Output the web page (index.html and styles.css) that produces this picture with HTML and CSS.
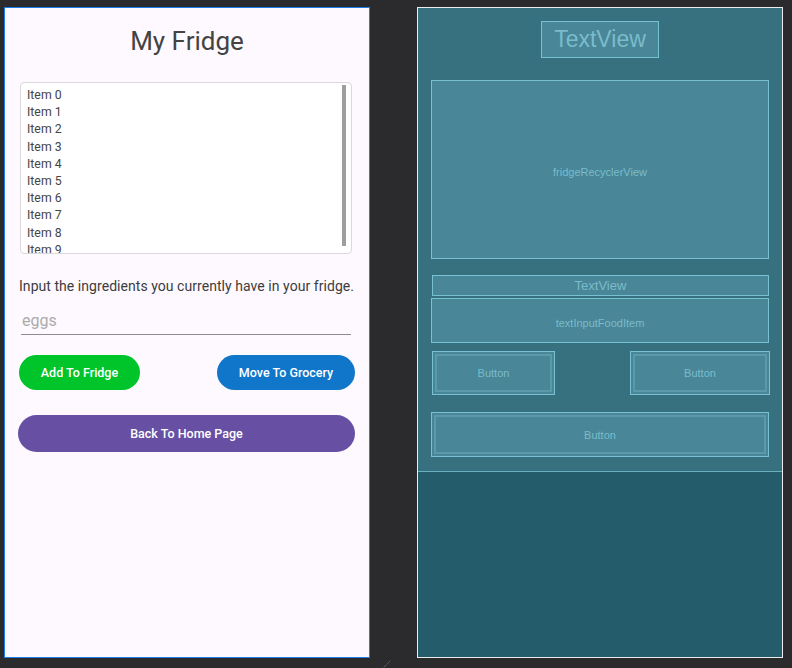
FILE: index.html
```html
<!DOCTYPE html>
<html lang="en">
<head>
<meta charset="utf-8">
<title>My Fridge</title>
<link rel="stylesheet" href="styles.css">
</head>
<body>
<div class="screen">
  <div class="phone">
    <h1 class="title">My Fridge</h1>
    <div class="list">
      <div class="item">Item 0</div>
      <div class="item">Item 1</div>
      <div class="item">Item 2</div>
      <div class="item">Item 3</div>
      <div class="item">Item 4</div>
      <div class="item">Item 5</div>
      <div class="item">Item 6</div>
      <div class="item">Item 7</div>
      <div class="item">Item 8</div>
      <div class="item">Item 9</div>
      <div class="scrollbar"></div>
    </div>
    <p class="prompt">Input the ingredients you currently have in your fridge.</p>
    <div class="input"><span class="hint">eggs</span></div>
    <div class="btn-row">
      <button class="btn btn-green btn-add">Add To Fridge</button>
      <button class="btn btn-blue btn-move">Move To Grocery</button>
    </div>
    <button class="btn btn-purple btn-wide">Back To Home Page</button>
  </div>

  <div class="blueprint">
    <div class="bp-top">
      <div class="bp-box bp-title">TextView</div>
      <div class="bp-box bp-recycler">fridgeRecyclerView</div>
      <div class="bp-box bp-text">TextView</div>
      <div class="bp-box bp-input">textInputFoodItem</div>
      <div class="bp-row">
        <div class="bp-btn bp-btn-1"><span class="bp-btn-inner">Button</span></div>
        <div class="bp-btn bp-btn-2"><span class="bp-btn-inner">Button</span></div>
      </div>
      <div class="bp-btn bp-btn-wide"><span class="bp-btn-inner">Button</span></div>
    </div>
    <div class="bp-bottom"></div>
  </div>

  <svg class="grip" width="9" height="9" viewBox="0 0 9 9">
    <line x1="0.5" y1="8.5" x2="8.5" y2="0.5" stroke="#7a7a7a" stroke-width="1" stroke-dasharray="1 1"/>
  </svg>
</div>
</body>
</html>
```

FILE: styles.css
```css
* {
  box-sizing: border-box;
}

html, body {
  margin: 0;
  padding: 0;
  background: #2b2b2d;
}

.screen {
  position: relative;
  width: 792px;
  height: 668px;
  display: flex;
  align-items: flex-start;
  gap: 47px;
  padding: 7px 0 0 4px;
  font-family: Roboto, "Noto Sans", sans-serif;
}

/* ---------- phone preview ---------- */
.phone {
  width: 366px;
  height: 651px;
  background: #fef9fe;
  border: 1px solid #1c7fe6;
  display: flex;
  flex-direction: column;
  align-items: flex-start;
}

.title {
  align-self: stretch;
  margin: 18px 0 0;
  height: 30px;
  line-height: 30px;
  font-size: 26px;
  font-weight: 400;
  color: #434343;
  text-align: center;
}

.list {
  position: relative;
  margin: 26px 0 0 15px;
  width: 332px;
  height: 172px;
  background: #ffffff;
  border: 1px solid #dcd8dc;
  border-radius: 4px;
  padding: 4px 0 0 6px;
  overflow: hidden;
}

.item {
  font-size: 12.3px;
  line-height: 17.2px;
  height: 17.2px;
  color: #454545;
}

.scrollbar {
  position: absolute;
  top: 2px;
  right: 5px;
  width: 4px;
  height: 161px;
  background: #9e9e9e;
}

.prompt {
  margin: 22px 0 0 14px;
  font-size: 14px;
  line-height: 20px;
  color: #3c3c3c;
  letter-spacing: 0.05px;
  white-space: nowrap;
}

.input {
  margin: 14px 0 0 16px;
  width: 330px;
  padding: 1px 0 3px 1px;
  border-bottom: 1.5px solid #8d8d8d;
}

.hint {
  display: block;
  font-size: 16px;
  line-height: 20px;
  color: #ababab;
}

.btn-row {
  margin: 20px 0 0 14px;
  width: 336px;
  display: flex;
  justify-content: space-between;
}

.btn {
  border: none;
  padding: 0;
  font-family: Roboto, "Noto Sans", sans-serif;
  font-size: 12.5px;
  font-weight: 500;
  color: #ffffff;
}

.btn-add {
  width: 121px;
  height: 35px;
  border-radius: 18px;
}

.btn-move {
  width: 138px;
  height: 35px;
  border-radius: 18px;
}

.btn-green {
  background: #00c52a;
}

.btn-blue {
  background: #0f76c9;
}

.btn-purple {
  background: #6750a4;
}

.btn-wide {
  margin: 25px 0 0 13px;
  width: 337px;
  height: 37px;
  border-radius: 19px;
}

/* ---------- blueprint ---------- */
.blueprint {
  width: 366px;
  height: 651px;
  border: 1px solid #ececec;
  display: flex;
  flex-direction: column;
  background: #245c6c;
}

.bp-top {
  height: 464px;
  background: #37707f;
  border-bottom: 1px solid #6aaebf;
  display: flex;
  flex-direction: column;
  align-items: flex-start;
  font-family: "Liberation Sans", Arial, sans-serif;
  color: #7bbccc;
}

.bp-bottom {
  flex: 1;
}

.bp-box {
  background: #498697;
  border: 1px solid #78c1d3;
  display: flex;
  align-items: center;
  justify-content: center;
}

.bp-title {
  align-self: center;
  margin-top: 13px;
  width: 118px;
  height: 37px;
  font-size: 23px;
}

.bp-recycler {
  margin: 22px 0 0 13px;
  width: 338px;
  height: 179px;
  padding-top: 5px;
  font-size: 11px;
}

.bp-text {
  margin: 16px 0 0 14px;
  width: 337px;
  height: 21px;
  font-size: 13px;
}

.bp-input {
  margin: 2px 0 0 13px;
  width: 338px;
  height: 45px;
  padding-top: 5px;
  font-size: 11px;
}

.bp-row {
  margin: 8px 0 0 14px;
  width: 338px;
  display: flex;
  justify-content: space-between;
}

.bp-btn {
  height: 44px;
  background: #498697;
  border: 1px solid #78c1d3;
  padding: 2px;
  font-size: 11px;
}

.bp-btn-inner {
  display: flex;
  height: 100%;
  align-items: center;
  justify-content: center;
  border: 2px solid #5a9aab;
}

.bp-btn-1 {
  width: 123px;
}

.bp-btn-2 {
  width: 140px;
}

.bp-btn-wide {
  margin: 17px 0 0 13px;
  width: 338px;
  height: 45px;
}

.grip {
  position: absolute;
  left: 382px;
  top: 660px;
}
```
